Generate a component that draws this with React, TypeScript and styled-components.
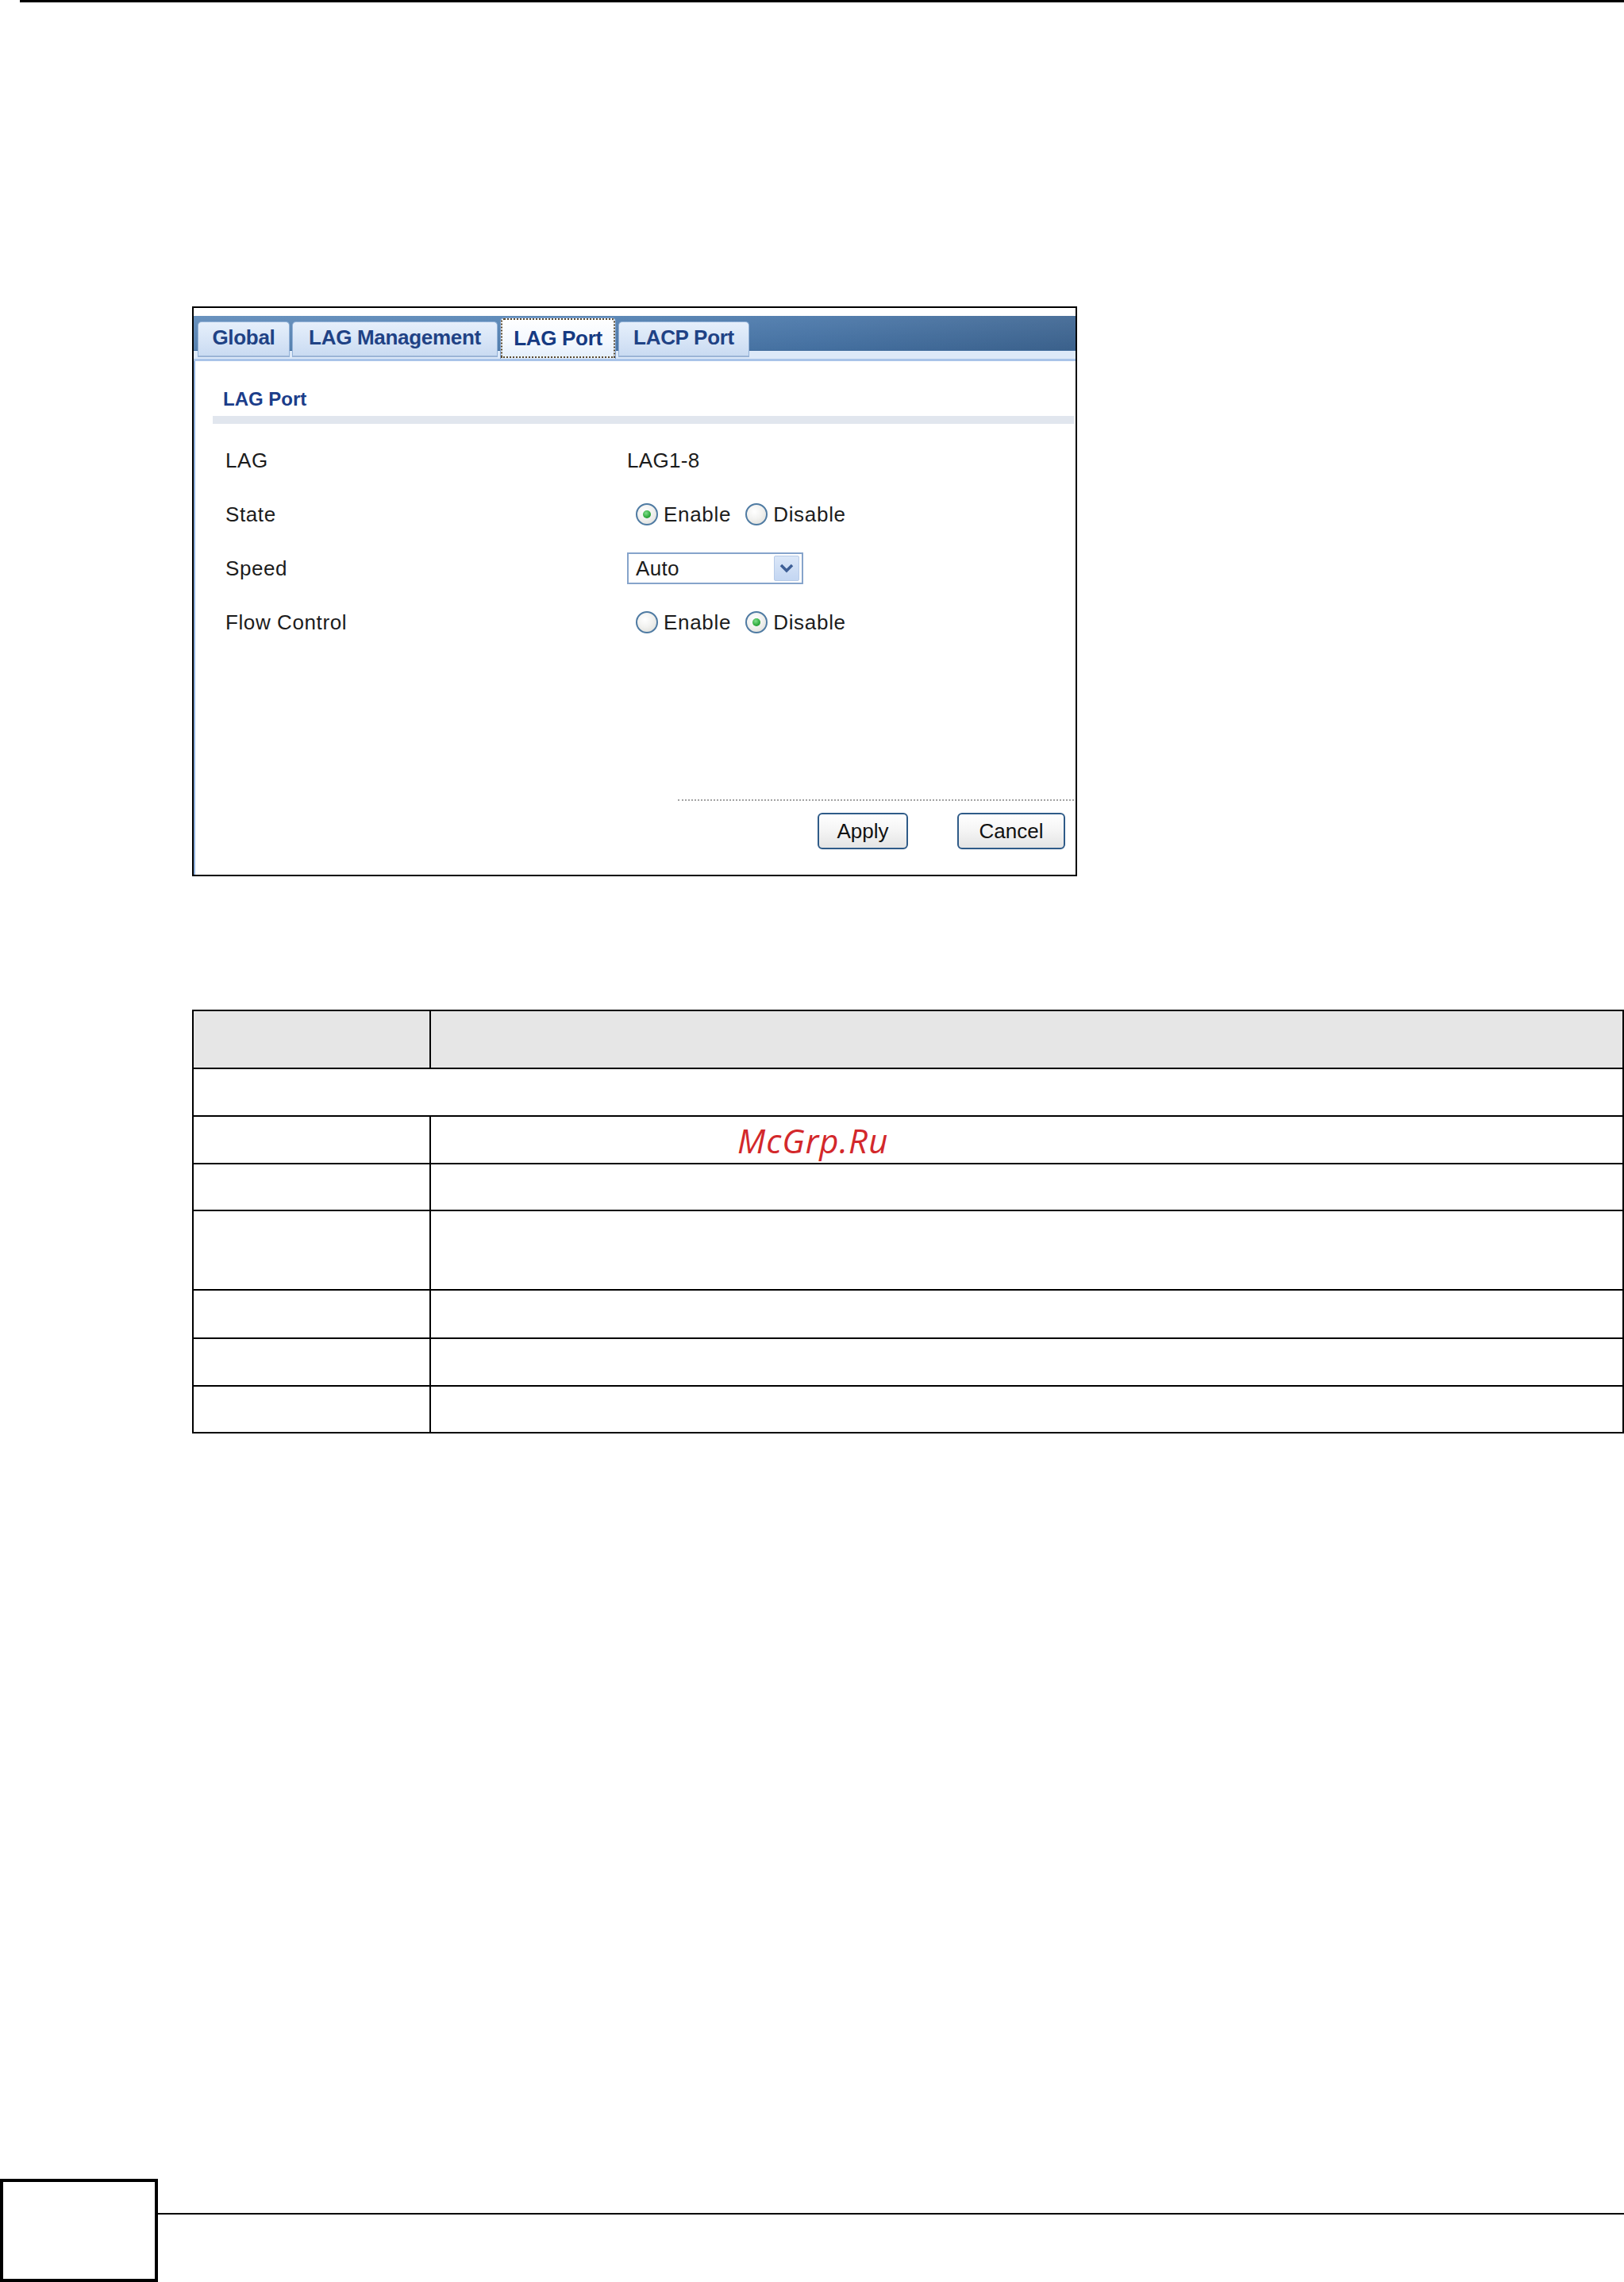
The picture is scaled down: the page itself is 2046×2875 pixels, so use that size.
import React from "react";
import styled, { createGlobalStyle } from "styled-components";

const GlobalStyle = createGlobalStyle`
  html, body { margin: 0; padding: 0; background: #fff; }
  body {
    width: 2046px;
    height: 2875px;
    overflow: hidden;
    font-family: "Liberation Sans", Arial, sans-serif;
  }
`;

const Page = styled.div`
  width: 2046px;
  height: 2875px;
  display: flex;
  flex-direction: column;
`;

const TopRule = styled.div`
  flex-shrink: 0;
  margin-left: 25px;
  height: 3px;
  background: #000;
`;

const Frame = styled.div`
  flex-shrink: 0;
  box-sizing: border-box;
  margin: 383px 0 0 242px;
  width: 1115px;
  height: 718px;
  border: 2px solid #000;
  padding-top: 10px;
  display: flex;
  flex-direction: column;
`;

const TabBar = styled.div`
  flex-shrink: 0;
  height: 54px;
  border-bottom: 3px solid #a9c4e9;
  padding: 0 0 0 5px;
  display: flex;
  align-items: flex-end;
  gap: 3px;
  background:
    linear-gradient(#dde9f8, #dde9f8) left bottom / 100% 10px no-repeat,
    linear-gradient(#3f6a9a, #3f6a9a) left 43px / 100% 2px no-repeat,
    linear-gradient(to bottom, rgba(255,255,255,0.08), rgba(0,0,0,0.05)) left top / 100% 44px no-repeat,
    linear-gradient(to right, #5d89b9 0%, #5584b5 35%, #4775a8 70%, #3d6592 100%) left top / 100% 44px no-repeat;
`;

const Tab = styled.div<{ $w: number; $active?: boolean }>`
  box-sizing: border-box;
  width: ${(p) => p.$w}px;
  height: ${(p) => (p.$active ? 52 : 45)}px;
  margin-bottom: ${(p) => (p.$active ? 0 : 2)}px;
  border: 1px solid ${(p) => (p.$active ? "#7fa2cf" : "#93b2d8")};
  border-bottom: none;
  border-radius: 5px 5px 0 0;
  background: ${(p) =>
    p.$active
      ? "linear-gradient(to bottom, #ffffff 0%, #f3f8fe 60%, #e3eefb 100%)"
      : "linear-gradient(to bottom, #e6effb 0%, #d6e4f6 55%, #c8daf1 100%)"};
  display: flex;
  align-items: center;
  justify-content: center;
  padding-bottom: ${(p) => (p.$active ? 0 : 6)}px;
  font-weight: bold;
  font-size: 26px;
  letter-spacing: -0.3px;
  color: ${(p) => (p.$active ? "#163a82" : "#1f4285")};
  white-space: nowrap;
  ${(p) =>
    p.$active
      ? `outline: 2px dotted #5a4a30; outline-offset: -3px;`
      : `box-shadow: inset 0 -4px 0 -2px #9bb4d6;`}
`;

const Panel = styled.div`
  flex: 1;
  border-left: 2px solid #8fb0dc;
  display: flex;
  flex-direction: column;
`;

const Heading = styled.div`
  margin-top: 33px;
  padding-left: 35px;
  height: 30px;
  line-height: 30px;
  font-size: 24px;
  font-weight: bold;
  color: #1b3d8a;
`;

const GrayBar = styled.div`
  margin: 6px 2px 0 22px;
  height: 10px;
  background: #e1e6ee;
`;

const FormGrid = styled.div`
  margin-top: 12px;
  padding-left: 38px;
  display: grid;
  grid-template-columns: 506px 1fr;
  grid-auto-rows: 68px;
  align-items: center;
`;

const Label = styled.div`
  font-size: 26px;
  letter-spacing: 0.6px;
  color: #1c1c1c;
`;

const Value = styled.div`
  font-size: 26px;
  letter-spacing: 0.3px;
  color: #1c1c1c;
  display: flex;
  align-items: center;
`;

const RadioGroup = styled.div`
  display: flex;
  align-items: center;
  padding-left: 11px;
  font-size: 26px;
  letter-spacing: 0.7px;
  color: #1c1c1c;
`;

const RadioOption = styled.label`
  display: flex;
  align-items: center;
  gap: 7px;
  margin-right: 18px;
`;

const RadioCircle = styled.span<{ $checked?: boolean }>`
  box-sizing: border-box;
  width: 28px;
  height: 28px;
  border-radius: 50%;
  border: 2px solid #4f7ba3;
  background: radial-gradient(circle at 40% 35%, #ffffff 0%, #f2f2f0 45%, #d9d9d4 100%);
  display: flex;
  align-items: center;
  justify-content: center;
  &::after {
    content: "";
    display: ${(p) => (p.$checked ? "block" : "none")};
    width: 10px;
    height: 10px;
    border-radius: 50%;
    background: radial-gradient(circle at 40% 35%, #7fe08a 0%, #2ea83c 60%, #1d8a2b 100%);
  }
`;

const Select = styled.div`
  box-sizing: border-box;
  width: 222px;
  height: 40px;
  border: 2px solid #86a4cb;
  background: #fff;
  display: flex;
  align-items: center;
  justify-content: space-between;
  padding: 0 3px 0 9px;
  font-size: 26px;
  color: #1c1c1c;
`;

const SelectArrow = styled.span`
  box-sizing: border-box;
  width: 32px;
  height: 32px;
  border-radius: 2px;
  border: 1px solid #b7cbe8;
  background: linear-gradient(to bottom, #dbe7f8 0%, #c3d6f2 100%);
  display: flex;
  align-items: center;
  justify-content: center;
`;

const Divider = styled.div`
  margin: 189px 2px 0 auto;
  width: 499px;
  border-top: 2px dotted #a3a3a3;
`;

const ButtonRow = styled.div`
  margin-top: 15px;
  padding-right: 13px;
  display: flex;
  justify-content: flex-end;
  gap: 62px;
`;

const Button = styled.button<{ $w: number }>`
  box-sizing: border-box;
  width: ${(p) => p.$w}px;
  height: 46px;
  border: 2px solid #2f5b88;
  border-radius: 6px;
  background: linear-gradient(to bottom, #ffffff 0%, #f4f4f4 50%, #e4e4e4 100%);
  font-family: "Liberation Sans", Arial, sans-serif;
  font-size: 26px;
  color: #111;
  padding: 0;
`;

const Table = styled.div`
  flex-shrink: 0;
  box-sizing: border-box;
  margin: 168px 0 0 242px;
  width: 1804px;
  border-top: 2px solid #000;
  border-left: 2px solid #000;
  display: grid;
  grid-template-columns: 299px 1fr;
  grid-template-rows: 73px 60px 60px 59px 100px 61px 60px 59px;
`;

const Cell = styled.div<{ $head?: boolean; $span?: boolean }>`
  box-sizing: border-box;
  border-right: 2px solid #000;
  border-bottom: 2px solid #000;
  background: ${(p) => (p.$head ? "#e6e6e6" : "#fff")};
  grid-column: ${(p) => (p.$span ? "1 / span 2" : "auto")};
  display: flex;
  align-items: center;
`;

const Watermark = styled.span`
  margin-left: 386px;
  font-family: "Open Sans", "DejaVu Sans", sans-serif;
  font-style: italic;
  font-size: 42px;
  color: #d3282b;
  letter-spacing: 1px;
`;

const Footer = styled.div`
  flex-shrink: 0;
  margin-top: 939px;
  height: 130px;
  display: flex;
  align-items: flex-start;
`;

const PageBox = styled.div`
  box-sizing: border-box;
  width: 199px;
  height: 130px;
  border: 4px solid #000;
`;

const FooterLine = styled.div`
  flex: 1;
  margin-top: 43px;
  height: 2px;
  background: #000;
`;

const Chevron = () => (
  <svg width="18" height="12" viewBox="0 0 18 12">
    <path d="M2 2 L9 9 L16 2" fill="none" stroke="#3e5f96" strokeWidth="3.5" strokeLinejoin="miter" />
  </svg>
);

const Radio = ({ checked, label }: { checked?: boolean; label: string }) => (
  <RadioOption>
    <RadioCircle $checked={checked} />
    {label}
  </RadioOption>
);

export default function App() {
  const rows = [0, 1, 2, 3, 4, 5];
  return (
    <>
      <GlobalStyle />
      <Page>
        <TopRule />
        <Frame>
          <TabBar>
            <Tab $w={116}>Global</Tab>
            <Tab $w={259}>LAG Management</Tab>
            <Tab $w={146} $active>
              LAG Port
            </Tab>
            <Tab $w={165}>LACP Port</Tab>
          </TabBar>
          <Panel>
            <Heading>LAG Port</Heading>
            <GrayBar />
            <FormGrid>
              <Label>LAG</Label>
              <Value>LAG1-8</Value>
              <Label>State</Label>
              <RadioGroup>
                <Radio checked label="Enable" />
                <Radio label="Disable" />
              </RadioGroup>
              <Label>Speed</Label>
              <Value>
                <Select>
                  Auto
                  <SelectArrow>
                    <Chevron />
                  </SelectArrow>
                </Select>
              </Value>
              <Label>Flow Control</Label>
              <RadioGroup>
                <Radio label="Enable" />
                <Radio checked label="Disable" />
              </RadioGroup>
            </FormGrid>
            <Divider />
            <ButtonRow>
              <Button $w={114}>Apply</Button>
              <Button $w={136}>Cancel</Button>
            </ButtonRow>
          </Panel>
        </Frame>
        <Table>
          <Cell $head />
          <Cell $head />
          <Cell $span />
          {rows.map((i) => (
            <React.Fragment key={i}>
              <Cell />
              <Cell>{i === 0 ? <Watermark>McGrp.Ru</Watermark> : null}</Cell>
            </React.Fragment>
          ))}
        </Table>
        <Footer>
          <PageBox />
          <FooterLine />
        </Footer>
      </Page>
    </>
  );
}
